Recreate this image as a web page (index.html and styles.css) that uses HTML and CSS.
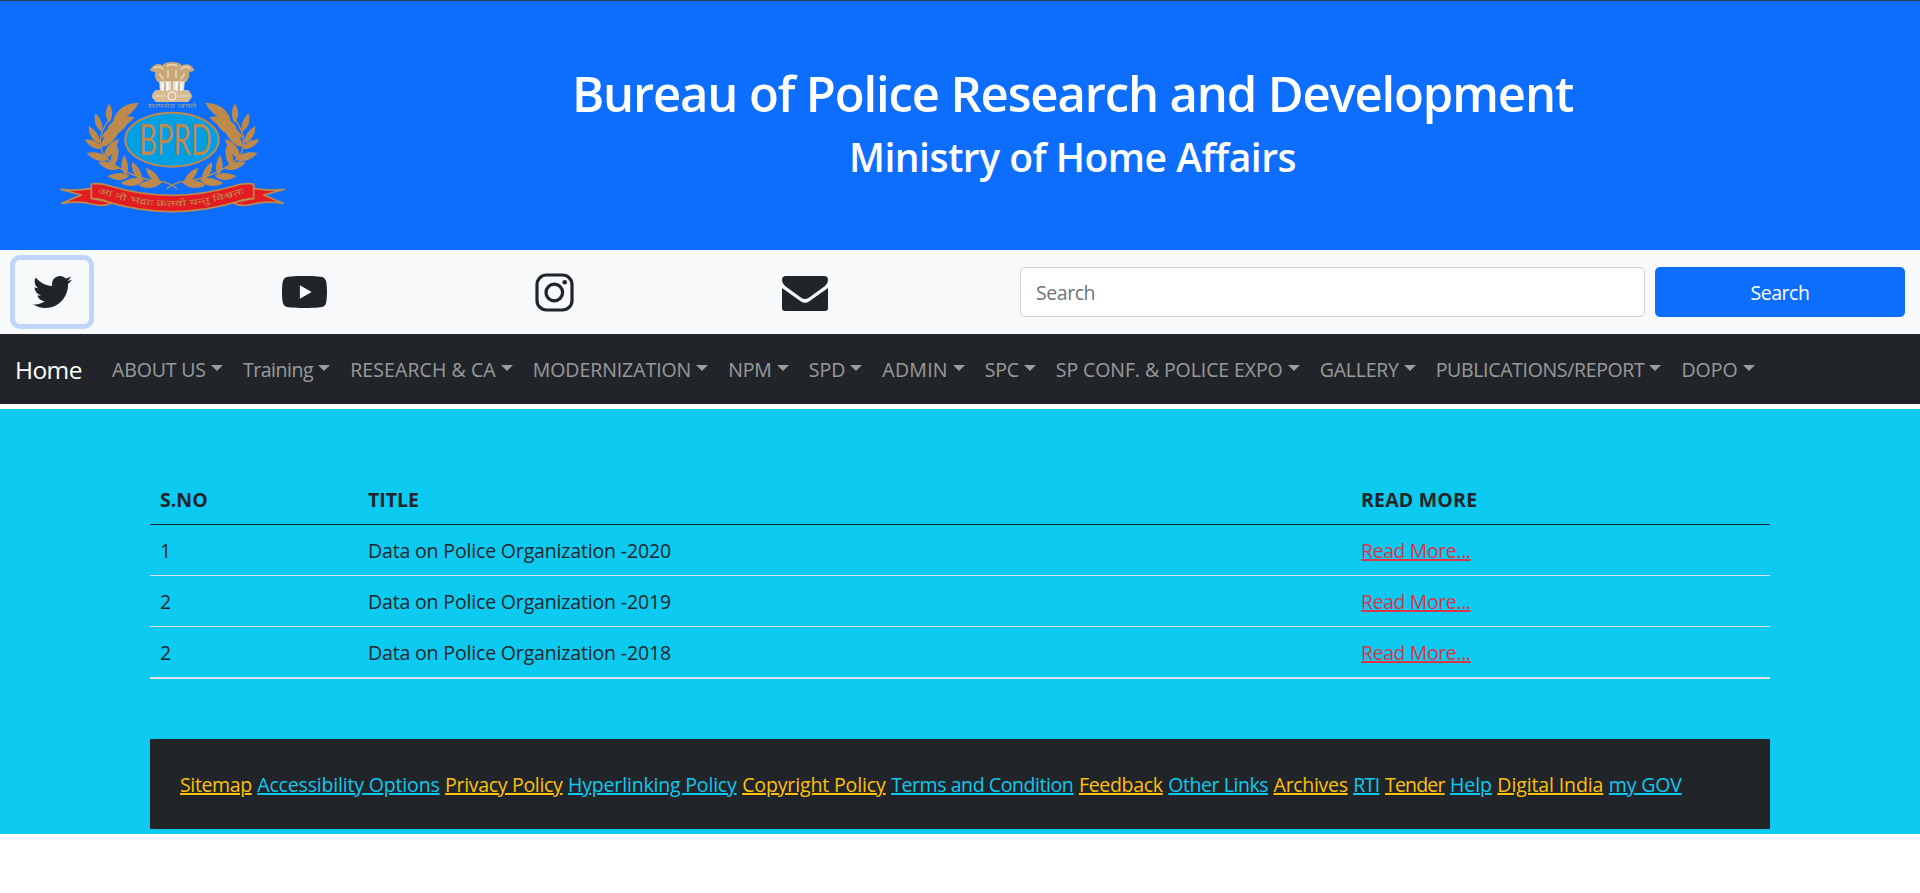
FILE: index.html
```
<!DOCTYPE html>
<html lang="en">
<head>
<meta charset="utf-8">
<title>Bureau of Police Research and Development</title>
<link rel="stylesheet" href="styles.css">
</head>
<body>
<header class="banner">
  <svg class="logo" viewBox="0 0 750 510">
    <defs>
      <path id="leaf" d="M0 0C.22-.22 .62-.26 1 0C.68 .17 .28 .2 0 0z"/>
      <g id="branch" fill="#bd8a4c">
        <use href="#leaf" transform="matrix(76 -54 54 76 190 212)"/>
        <use href="#leaf" transform="matrix(0 -58 58 0 178 218)"/>
        <use href="#leaf" transform="matrix(82 -34 34 82 172 236)"/>
        <use href="#leaf" transform="matrix(-20 -55 55 -20 156 245)"/>
        <use href="#leaf" transform="matrix(75 -36 36 75 155 262)"/>
        <use href="#leaf" transform="matrix(-34 -52 52 -34 150 280)"/>
        <use href="#leaf" transform="matrix(56 -52 52 56 152 292)"/>
        <use href="#leaf" transform="matrix(-53 -27 27 -53 157 295)"/>
        <use href="#leaf" transform="matrix(43 -61 61 43 163 327)"/>
        <use href="#leaf" transform="matrix(-67 -19 19 -67 177 328)"/>
        <use href="#leaf" transform="matrix(15 -62 62 15 188 350)"/>
        <use href="#leaf" transform="matrix(-62 -20 20 -62 207 356)"/>
        <use href="#leaf" transform="matrix(-6 -60 60 -6 228 375)"/>
        <use href="#leaf" transform="matrix(-66 2 -2 -66 238 377)"/>
        <use href="#leaf" transform="matrix(-29 -55 55 -29 275 390)"/>
        <use href="#leaf" transform="matrix(-70 10 -10 -70 282 390)"/>
        <use href="#leaf" transform="matrix(-42 -45 45 -42 330 398)"/>
        <use href="#leaf" transform="matrix(-72 11 -11 -72 336 395)"/>
        <path d="M182 200Q110 300 205 352Q260 388 335 395Q362 400 382 417" fill="none" stroke="#bd8a4c" stroke-width="4"/>
      </g>
    </defs>
    <use href="#branch"/>
    <use href="#branch" transform="translate(732 0) scale(-1 1)"/>
    <g fill="#c8a878">
      <path d="M345 40Q366 32 388 40L395 46Q415 38 424 48L434 60Q428 66 418 66Q420 80 412 92L404 98H328L320 92Q312 80 316 66Q304 66 299 60L310 47Q322 38 337 46z"/>
      <path d="M328 94H404L402 124H330z" fill="#eadfce"/>
      <path d="M318 120H414Q430 134 424 144L414 156H318L307 144Q302 132 318 120z" fill="#d6bc94"/>
      <circle cx="366" cy="138" r="12" fill="none" stroke="#f3eadb" stroke-width="4"/>
      <path d="M312 55Q330 45 340 58M350 48Q366 40 382 48M392 58Q405 44 422 56M328 72L340 88M404 72L392 88M354 60V84M378 60V84M318 138H345M388 138H415" fill="none" stroke="#e6d3b3" stroke-width="5"/>
      <path d="M338 100V122M352 96V122M380 96V122M394 100V122" stroke="#fff" stroke-width="6"/>
      <path d="M345 97V120M366 92V120M387 97V120" stroke="#b08850" stroke-width="3"/>
    </g>
    <text x="366" y="174" class="motto-top" textLength="146" lengthAdjust="spacingAndGlyphs">सत्यमेव जयते</text>
    <ellipse cx="366" cy="269" rx="140" ry="81" fill="#029fe3" stroke="#bd8a4c" stroke-width="6"/>
    <text x="376" y="315" class="logo-name" textLength="218" lengthAdjust="spacingAndGlyphs">BPRD</text>
    <g fill="#e31b23" stroke="#bd8a4c" stroke-width="5" stroke-linejoin="round">
      <path d="M125 415Q80 424 33 418L94 435L35 460Q90 452 125 462Q160 472 187 458L125 445z"/>
      <path d="M610 415Q655 424 702 418L641 435L700 460Q645 452 610 462Q575 472 548 458L610 445z"/>
      <path d="M124 402Q150 398 180 408Q366 464 552 408Q582 398 611 402V446Q590 445 552 458Q366 512 180 458Q150 445 124 446z"/>
    </g>
    <path id="ribbon-line" d="M143 430Q155 432 180 440Q366 498 552 440Q575 432 592 430" fill="none"/>
    <text class="motto"><textPath href="#ribbon-line" textLength="448" lengthAdjust="spacingAndGlyphs">आ नो भद्राः क्रतवो यन्तु विश्वतः</textPath></text>
  </svg>
  <div class="banner-text">
    <h1 class="title">Bureau of Police Research and Development</h1>
    <h2 class="subtitle">Ministry of Home Affairs</h2>
  </div>
</header>

<div class="toolbar">
  <a class="social social-active"><svg width="39" height="32" viewBox="0 48 512 416" preserveAspectRatio="none"><path d="M459.37 151.716c.325 4.548.325 9.097.325 13.645 0 138.72-105.583 298.558-298.558 298.558-59.452 0-114.68-17.219-161.137-47.106 8.447.974 16.568 1.299 25.34 1.299 49.055 0 94.213-16.568 130.274-44.832-46.132-.975-84.792-31.188-98.112-72.772 6.498.974 12.995 1.624 19.818 1.624 9.421 0 18.843-1.3 27.614-3.573-48.081-9.747-84.143-51.98-84.143-102.985v-1.299c13.969 7.797 30.214 12.67 47.431 13.319-28.264-18.843-46.781-51.005-46.781-87.391 0-19.492 5.197-37.36 14.294-52.954 51.655 63.675 129.3 105.258 216.365 109.807-1.624-7.797-2.599-15.918-2.599-24.04 0-57.828 46.782-104.934 104.934-104.934 30.213 0 57.502 12.67 76.67 33.137 23.715-4.548 46.456-13.32 66.599-25.34-7.798 24.366-24.366 44.833-46.132 57.827 21.117-2.273 41.584-8.122 60.426-16.243-14.292 20.791-32.161 39.308-52.628 54.253z"/></svg></a>
  <a class="social"><svg width="45" height="32" viewBox="14.9 64 546.2 384" preserveAspectRatio="none"><path d="M549.655 124.083c-6.281-23.65-24.787-42.276-48.284-48.597C458.781 64 288 64 288 64S117.22 64 74.629 75.486c-23.497 6.322-42.003 24.947-48.284 48.597-11.412 42.867-11.412 132.305-11.412 132.305s0 89.438 11.412 132.305c6.281 23.65 24.787 41.5 48.284 47.821C117.22 448 288 448 288 448s170.78 0 213.371-11.486c23.497-6.321 42.003-24.171 48.284-47.821 11.412-42.867 11.412-132.305 11.412-132.305s0-89.438-11.412-132.305zm-317.51 213.508V175.185l142.739 81.205-142.739 81.201z"/></svg></a>
  <a class="social social-insta"><svg width="39" height="39" viewBox="0 0 39 39"><rect x="2" y="2" width="35" height="35" rx="9.5" fill="none" stroke="#212529" stroke-width="3.2"/><circle cx="19.3" cy="19.5" r="8.3" fill="none" stroke="#212529" stroke-width="3.3"/><circle cx="29.7" cy="9.3" r="2.3"/></svg></a>
  <a class="social social-mail"><svg width="46" height="35" viewBox="0 0 46 35"><path d="M4 0H42Q46 0 46 4Q46 7.500 43 10L26.500 22Q23 24 19.500 22L3 10Q0 7.500 0 4Q0 0 4 0z"/><path d="M0 12L19 25.500Q23 28 27 25.500L46 12V32Q46 35 43 35H3Q0 35 0 32z"/></svg></a>
  <form class="search">
    <input class="search-input" type="text" placeholder="Search">
    <button class="search-btn" type="button">Search</button>
  </form>
</div>

<nav class="navbar">
  <a class="brand">Home</a>
  <a class="nav-link n1">ABOUT US</a>
  <a class="nav-link n2">Training</a>
  <a class="nav-link n3">RESEARCH &amp; CA</a>
  <a class="nav-link n4">MODERNIZATION</a>
  <a class="nav-link n5">NPM</a>
  <a class="nav-link">SPD</a>
  <a class="nav-link n7">ADMIN</a>
  <a class="nav-link n8">SPC</a>
  <a class="nav-link n9">SP CONF. &amp; POLICE EXPO</a>
  <a class="nav-link n10">GALLERY</a>
  <a class="nav-link n11">PUBLICATIONS/REPORT</a>
  <a class="nav-link">DOPO</a>
</nav>

<main class="content">
  <table class="reports">
    <thead>
      <tr><th class="col-no">S.NO</th><th class="col-title">TITLE</th><th class="col-more">READ MORE</th></tr>
    </thead>
    <tbody>
      <tr><td>1</td><td>Data on Police Organization -2020</td><td><a class="more">Read More...</a></td></tr>
      <tr><td>2</td><td>Data on Police Organization -2019</td><td><a class="more">Read More...</a></td></tr>
      <tr><td>2</td><td>Data on Police Organization -2018</td><td><a class="more">Read More...</a></td></tr>
    </tbody>
  </table>
  <footer class="links">
    <a class="f1">Sitemap</a>
    <a class="f2">Accessibility Options</a>
    <a class="f3">Privacy Policy</a>
    <a class="f4">Hyperlinking Policy</a>
    <a class="f5">Copyright Policy</a>
    <a class="f6">Terms and Condition</a>
    <a class="f7">Feedback</a>
    <a class="f8">Other Links</a>
    <a class="f9">Archives</a>
    <a class="f10">RTI</a>
    <a class="f11">Tender</a>
    <a class="f12">Help</a>
    <a class="f13">Digital India</a>
    <a class="f14">my GOV</a>
  </footer>
</main>
</body>
</html>
```

FILE: styles.css
```
* { box-sizing: border-box; }

body {
  margin: 0;
  background: #fff;
  color: #212529;
  font-family: "Open Sans", "Noto Sans", sans-serif;
  font-size: 19.5px;
  line-height: 30px;
}

/* Banner */
.banner {
  height: 250px;
  border-top: 1px solid #2b3a55;
  background: #0d6efd;
  color: #fff;
  display: grid;
  grid-template-columns: 293px 1fr;
  padding: 49px 118px 0 50px;
}
.logo { width: 250px; height: 170px; display: block; }
.logo-name {
  font: 400 128px Lato, sans-serif;
  fill: #bd8a4c;
  text-anchor: middle;
}
.motto { font: 400 26px "Noto Sans Devanagari", "Noto Sans", sans-serif; fill: #bd8a4c; }
.motto-top { font: 18px "Noto Sans Devanagari", "Noto Sans", sans-serif; fill: #9c9a94; text-anchor: middle; }
.banner-text { text-align: center; padding-top: 13px; }
.title, .subtitle { margin: 0; font-weight: 600; white-space: nowrap; }
.title { font-size: 49px; line-height: 60px; letter-spacing: -1.15px; }
.subtitle { font-size: 39px; line-height: 48px; letter-spacing: -.5px; margin-top: 10px; }

/* Social and search bar */
.toolbar {
  height: 84px;
  padding: 10px 15px;
  background: #f8f9fa;
  display: grid;
  grid-template-columns: 250px 250px 250px 255px 1fr;
  align-items: center;
}
.social {
  height: 64px;
  width: 74px;
  padding-left: 17px;
  display: flex;
  align-items: center;
  fill: #212529;
}
.social-active {
  border-radius: 5px;
  padding-left: 18px;
  box-shadow: 0 0 0 5px rgba(13, 110, 253, .25);
}
.social-insta { padding-left: 20px; }
.social-mail { padding-top: 3px; }
.search { display: grid; grid-template-columns: 625px 250px; gap: 10px; height: 50px; }
.search-input, .search-btn {
  font: inherit;
  letter-spacing: -.45px;
  border-radius: 5px;
  padding: 2px 15px 0;
}
.search-input { border: 1px solid #ced4da; background: #fff; }
.search-input::placeholder { color: #6c757d; opacity: 1; }
.search-btn { border: 0; background: #0d6efd; color: #fff; }

/* Navigation */
.navbar {
  height: 70px;
  padding: 2px 0 0 15px;
  background: #212529;
  display: flex;
  align-items: center;
  white-space: nowrap;
}
.brand { width: 87px; color: #fff; font-size: 24.5px; line-height: 37.5px; letter-spacing: -.6px; }
.nav-link { padding: 0 10px; color: rgba(255, 255, 255, .55); }
.nav-link::after {
  content: "";
  display: inline-block;
  margin-left: 5px;
  vertical-align: 6px;
  border-top: 6px solid;
  border-left: 6px solid transparent;
  border-right: 6px solid transparent;
}
.n1 { letter-spacing: -.14px; }
.n2 { letter-spacing: -.45px; }
.n3 { letter-spacing: .09px; }
.n4 { letter-spacing: -.07px; }
.n5 { letter-spacing: -.15px; }
.n7 { letter-spacing: .26px; }
.n8 { letter-spacing: -.23px; }
.n9 { letter-spacing: -.09px; }
.n10 { letter-spacing: -.23px; }
.n11 { letter-spacing: -.34px; }

/* Report list */
.content { margin-top: 5px; padding: 65px 150px 5px; background: #0dcaf0; }
.reports { width: 100%; table-layout: fixed; border-collapse: separate; border-spacing: 0; }
.reports th, .reports td {
  height: 51px;
  padding: 11px 10px 9px;
  text-align: left;
  border-bottom: 1px solid #dee2e6;
  line-height: 30px;
  letter-spacing: -.16px;
}
.reports th { font-weight: 700; letter-spacing: 0; border-bottom-color: #212529; }
.reports tbody tr:last-child td { border-bottom-width: 2px; }
.reports .col-no { width: 208px; }
.reports .col-more { width: 419px; letter-spacing: .2px; }
.more { color: #dc3545; letter-spacing: -.4px; text-decoration: underline 2px; }

/* Footer links */
.links {
  height: 90px;
  margin-top: 60px;
  padding: 31px 30px 29px;
  background: #212529;
  display: flex;
  gap: 5.5px;
  white-space: nowrap;
}
.links a { color: #0dcaf0; text-decoration: underline 2px; }
.links a:nth-child(odd) { color: #ffc107; }
.f1 { letter-spacing: -.37px; }
.f2 { letter-spacing: -.17px; }
.f3 { letter-spacing: -.31px; }
.f4 { letter-spacing: -.18px; }
.f5 { letter-spacing: -.13px; }
.f6 { letter-spacing: -.42px; }
.f7 { letter-spacing: -.3px; }
.f8 { letter-spacing: -.44px; }
.f9 { letter-spacing: -.31px; }
.f10 { letter-spacing: -.63px; }
.f11 { letter-spacing: -.82px; }
.f12 { letter-spacing: -.1px; }
.f13 { letter-spacing: -.12px; }
.f14 { letter-spacing: -.17px; }
```
